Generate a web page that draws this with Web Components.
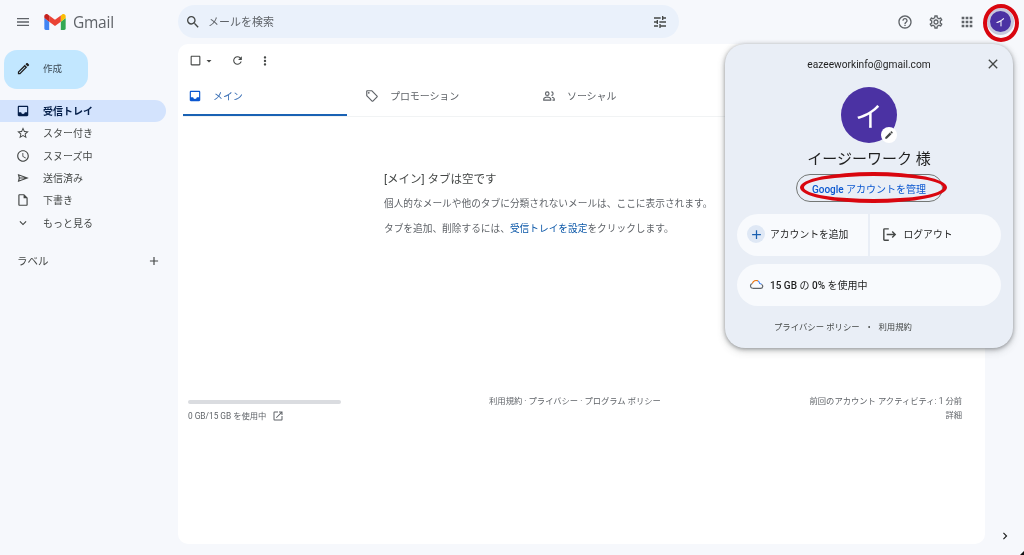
<!DOCTYPE html>
<html lang="ja">
<head>
<meta charset="utf-8">
<title>Gmail</title>
<style>
  html, body { margin: 0; padding: 0; height: 100%; background: #f6f8fc; overflow: hidden; }
  body { font-family: Roboto, "Noto Sans CJK JP", sans-serif; color: #444746; }
</style>
</head>
<body>
<gm-app></gm-app>
<script>
const ICONS = {
  menu: 'M3 18h18v-2H3v2zm0-5h18v-2H3v2zm0-7v2h18V6H3z',
  search: 'M15.5 14h-.79l-.28-.27A6.471 6.471 0 0 0 16 9.5 6.5 6.5 0 1 0 9.5 16c1.61 0 3.09-.59 4.23-1.57l.27.28v.79l5 4.99L20.49 19l-4.99-5zm-6 0C7.01 14 5 11.99 5 9.5S7.01 5 9.5 5 14 7.01 14 9.5 11.99 14 9.5 14z',
  tune: 'M3 17v2h6v-2H3zM3 5v2h10V5H3zm10 16v-2h8v-2h-8v-2h-2v6h2zM7 9v2H3v2h4v2h2V9H7zm14 4v-2H11v2h10zm-6-4h2V7h4V5h-4V3h-2v6z',
  help: 'M11 18h2v-2h-2v2zm1-16C6.48 2 2 6.48 2 12s4.48 10 10 10 10-4.48 10-10S17.52 2 12 2zm0 18c-4.41 0-8-3.59-8-8s3.59-8 8-8 8 3.59 8 8-3.59 8-8 8zm0-14c-2.21 0-4 1.79-4 4h2c0-1.1.9-2 2-2s2 .9 2 2c0 2-3 1.75-3 5h2c0-2.25 3-2.5 3-5 0-2.21-1.79-4-4-4z',
  settings: 'M19.43 12.98c.04-.32.07-.64.07-.98 0-.34-.03-.66-.07-.98l2.11-1.65c.19-.15.24-.42.12-.64l-2-3.46c-.09-.16-.26-.25-.44-.25-.06 0-.12.01-.17.03l-2.49 1c-.52-.4-1.08-.73-1.69-.98l-.38-2.65C14.46 2.18 14.25 2 14 2h-4c-.25 0-.46.18-.49.42l-.38 2.65c-.61.25-1.17.59-1.69.98l-2.49-1c-.06-.02-.12-.03-.18-.03-.17 0-.34.09-.43.25l-2 3.46c-.13.22-.07.49.12.64l2.11 1.65c-.04.32-.07.65-.07.98 0 .33.03.66.07.98l-2.11 1.65c-.19.15-.24.42-.12.64l2 3.46c.09.16.26.25.44.25.06 0 .12-.01.17-.03l2.49-1c.52.4 1.08.73 1.69.98l.38 2.65c.03.24.24.42.49.42h4c.25 0 .46-.18.49-.42l.38-2.65c.61-.25 1.17-.59 1.69-.98l2.49 1c.06.02.12.03.18.03.17 0 .34-.09.43-.25l2-3.46c.12-.22.07-.49-.12-.64l-2.11-1.65zm-1.98-1.71c.04.31.05.52.05.73 0 .21-.02.43-.05.73l-.14 1.13.89.7 1.08.84-.7 1.21-1.27-.51-1.04-.42-.9.68c-.43.32-.84.56-1.25.73l-1.06.43-.16 1.13-.2 1.35h-1.4l-.19-1.35-.16-1.13-1.06-.43c-.43-.18-.83-.41-1.23-.71l-.91-.7-1.06.43-1.27.51-.7-1.21 1.08-.84.89-.7-.14-1.13c-.03-.31-.05-.54-.05-.74s.02-.43.05-.73l.14-1.13-.89-.7-1.08-.84.7-1.21 1.27.51 1.04.42.9-.68c.43-.32.84-.56 1.25-.73l1.06-.43.16-1.13.2-1.35h1.39l.19 1.35.16 1.13 1.06.43c.43.18.83.41 1.23.71l.91.7 1.06-.43 1.27-.51.7 1.21-1.07.85-.89.7.14 1.13zM12 8c-2.21 0-4 1.79-4 4s1.79 4 4 4 4-1.79 4-4-1.79-4-4-4zm0 6c-1.1 0-2-.9-2-2s.9-2 2-2 2 .9 2 2-.9 2-2 2z',
  apps: 'M4 8h4V4H4v4zm6 12h4v-4h-4v4zm-6 0h4v-4H4v4zm0-6h4v-4H4v4zm6 0h4v-4h-4v4zm6-10v4h4V4h-4zm-6 4h4V4h-4v4zm6 6h4v-4h-4v4zm0 6h4v-4h-4v4z',
  edit: 'M3 17.25V21h3.75L17.81 9.94l-3.75-3.75L3 17.25zM20.71 7.04a1 1 0 0 0 0-1.41l-2.34-2.34a1 1 0 0 0-1.41 0l-1.83 1.83 3.75 3.75 1.83-1.83z',
  pen: 'M14.06 9.02l.92.92L5.92 19H5v-.92l9.06-9.06M17.66 3c-.25 0-.51.1-.7.29l-1.83 1.83 3.75 3.75 1.83-1.83a1 1 0 0 0 0-1.41l-2.34-2.34c-.2-.2-.45-.29-.71-.29zM14.06 6.19 3 17.25V21h3.75L17.81 9.94l-3.75-3.75z',
  inbox: 'M19 3H5c-1.1 0-2 .9-2 2v14c0 1.1.9 2 2 2h14c1.1 0 2-.9 2-2V5c0-1.1-.9-2-2-2zm0 2v9h-4c0 1.66-1.34 3-3 3s-3-1.34-3-3H5V5h14z',
  star: 'M22 9.24l-7.19-.62L12 2 9.19 8.63 2 9.24l5.46 4.73L5.82 21 12 17.27 18.18 21l-1.63-7.03L22 9.24zM12 15.4l-3.76 2.27 1-4.28-3.32-2.88 4.38-.38L12 6.1l1.71 4.04 4.38.38-3.32 2.88 1 4.28L12 15.4z',
  clock: 'M11.99 2C6.47 2 2 6.48 2 12s4.47 10 9.99 10C17.52 22 22 17.52 22 12S17.52 2 11.99 2zM12 20c-4.42 0-8-3.58-8-8s3.58-8 8-8 8 3.58 8 8-3.58 8-8 8zm.5-13H11v6l5.25 3.15.75-1.23-4.5-2.67z',
  send: 'M3 5l19 7-19 7 1.6-7zM5.8 8l.8 3h8.1zM6.6 13l-.8 3 8.9-3z',
  draft: 'M14 2H6c-1.1 0-1.99.9-1.99 2L4 20c0 1.1.89 2 1.99 2H18c1.1 0 2-.9 2-2V8l-6-6zM6 20V4h7v5h5v11H6z',
  expand: 'M16.59 8.59 12 13.17 7.41 8.59 6 10l6 6 6-6z',
  plus: 'M19 13h-6v6h-2v-6H5v-2h6V5h2v6h6v2z',
  refresh: 'M17.65 6.35A7.958 7.958 0 0 0 12 4c-4.42 0-7.99 3.58-7.99 8s3.57 8 7.99 8c3.73 0 6.84-2.55 7.73-6h-2.08A5.99 5.99 0 0 1 12 18c-3.31 0-6-2.69-6-6s2.69-6 6-6c1.66 0 3.14.69 4.22 1.78L13 11h7V4l-2.35 2.35z',
  more: 'M12 8c1.1 0 2-.9 2-2s-.9-2-2-2-2 .9-2 2 .9 2 2 2zm0 2c-1.1 0-2 .9-2 2s.9 2 2 2 2-.9 2-2-.9-2-2-2zm0 6c-1.1 0-2 .9-2 2s.9 2 2 2 2-.9 2-2-.9-2-2-2z',
  tag: 'M21.41 11.41l-8.83-8.83C12.21 2.21 11.7 2 11.17 2H4c-1.1 0-2 .9-2 2v7.17c0 .53.21 1.04.59 1.41l8.83 8.83c.78.78 2.05.78 2.83 0l7.17-7.17c.78-.78.78-2.04-.01-2.83zM12.83 20L4 11.17V4h7.17L20 12.83 12.83 20zM6.5 5A1.5 1.5 0 1 0 6.5 8 1.5 1.5 0 1 0 6.5 5z',
  people: 'M9 4a4 4 0 1 0 0 8 4 4 0 0 0 0-8zm0 2a2 2 0 1 1 0 4 2 2 0 0 1 0-4zM16 4v2a2 2 0 0 1 0 4v2a4 4 0 0 0 0-8zM9 13c-3.3 0-7 1.6-7 4v3h14v-3c0-2.4-3.7-4-7-4zm0 2c2.700 0 5 1.200 5 2v1H4v-1c0-.8 2.300-2 5-2zM17 13.200v2c1.800.4 3 1.200 3 1.800v1h-2v2h4v-3c0-2-2.300-3.300-5-3.800z',
  open: 'M19 19H5V5h7V3H5a2 2 0 0 0-2 2v14a2 2 0 0 0 2 2h14c1.1 0 2-.9 2-2v-7h-2v7zM14 3v2h3.59l-9.83 9.83 1.41 1.41L19 6.41V10h2V3h-7z',
  logout: 'M11 3H5a2 2 0 0 0-2 2v14a2 2 0 0 0 2 2h6v-2H5V5h6V3zm5.5 4-1.41 1.41L17.67 11H8v2h9.67l-2.58 2.59L16.5 17l5-5-5-5z',
  close: 'M19 6.41 17.59 5 12 10.59 6.41 5 5 6.41 10.59 12 5 17.59 6.41 19 12 13.41 17.59 19 19 17.59 13.41 12z',
  chevron: 'M10 6 8.59 7.41 13.17 12l-4.58 4.59L10 18l6-6z',
  check: 'M19 5v14H5V5h14m0-2H5c-1.1 0-2 .9-2 2v14c0 1.1.9 2 2 2h14c1.1 0 2-.9 2-2V5c0-1.1-.9-2-2-2z',
  caret: 'M7 10l5 5 5-5z'
};

class GmIcon extends HTMLElement {
  connectedCallback() {
    const size = this.getAttribute('size') || 16;
    const color = this.getAttribute('color') || '#444746';
    this.attachShadow({ mode: 'open' }).innerHTML = `
      <style>
        :host { display: inline-flex; width: ${size}px; height: ${size}px; flex: none; }
        svg { width: 100%; height: 100%; display: block; fill: ${color}; fill-rule: evenodd; }
      </style>
      <svg viewBox="0 0 24 24"><path d="${ICONS[this.getAttribute('name')]}"/></svg>`;
  }
}
customElements.define('gm-icon', GmIcon);

class GmTopbar extends HTMLElement {
  connectedCallback() {
    this.attachShadow({ mode: 'open' }).innerHTML = `
      <style>
        :host { display: flex; align-items: center; height: 43px; padding-bottom: 1px; }
        .brand { width: 178px; flex: none; display: flex; align-items: center; padding-left: 15px; box-sizing: border-box; }
        .logo { width: 22px; height: 16px; margin-left: 13px; display: block; }
        .word { font: 15.5px "Open Sans", Roboto, sans-serif; color: #5f6368; margin-left: 7px; letter-spacing: -.25px; }
        .search { width: 501px; height: 33px; border-radius: 17px; background: #eaf1fb; display: flex; align-items: center; padding: 0 11px 0 7px; box-sizing: border-box; }
        .search span { font-size: 11px; color: #5f6368; margin: 0 0 2px 7px; flex: 1; }
        .actions { display: flex; align-items: center; margin-left: auto; padding-right: 13px; gap: 15px; }
        .avatar { position: relative; width: 21px; height: 21px; margin-bottom: 1px; border-radius: 50%; background: #4b32a3; color: #fff; font-size: 10px; display: grid; place-items: center; box-shadow: 0 0 0 3px #c7c9dc; }
        .avatar::after { content: ""; position: absolute; left: -7px; top: -7px; width: 36px; height: 38px; box-sizing: border-box; border: 4.5px solid #d9060f; border-radius: 50%; }
      </style>
      <div class="brand">
        <gm-icon name="menu" size="16" color="#5f6368"></gm-icon>
        <svg class="logo" viewBox="52 42 88 66">
          <path fill="#4285f4" d="M58 108h14V74L52 59v43c0 3.32 2.69 6 6 6"/>
          <path fill="#34a853" d="M120 108h14c3.32 0 6-2.69 6-6V59l-20 15"/>
          <path fill="#fbbc04" d="M120 48v26l20-15v-8c0-7.42-8.47-11.65-14.4-7.2"/>
          <path fill="#ea4335" d="M72 74V48l24 18 24-18v26L96 92"/>
          <path fill="#c5221f" d="M52 51v8l20 15V48l-5.6-4.2c-5.94-4.45-14.4-.22-14.4 7.2"/>
        </svg>
        <span class="word">Gmail</span>
      </div>
      <div class="search">
        <gm-icon name="search" size="16"></gm-icon>
        <span>メールを検索</span>
        <gm-icon name="tune" size="16"></gm-icon>
      </div>
      <div class="actions">
        <gm-icon name="help" size="16" color="#5f6368"></gm-icon>
        <gm-icon name="settings" size="16" color="#5f6368"></gm-icon>
        <gm-icon name="apps" size="16" color="#5f6368"></gm-icon>
        <div class="avatar">イ</div>
      </div>`;
  }
}
customElements.define('gm-topbar', GmTopbar);

class GmNavItem extends HTMLElement {
  connectedCallback() {
    const active = this.hasAttribute('active');
    this.attachShadow({ mode: 'open' }).innerHTML = `
      <style>
        :host { display: flex; align-items: center; height: 22.3px; padding-left: 16px; border-radius: 0 11px 11px 0; font-size: 10px; color: #444746; }
        :host([active]) { background: #d3e3fd; color: #041e49; font-weight: 700; }
        .label { margin: 0 0 1px 13px; }
      </style>
      <gm-icon name="${this.getAttribute('icon')}" size="14" color="${active ? '#041e49' : '#444746'}"></gm-icon>
      <span class="label"><slot></slot></span>`;
  }
}
customElements.define('gm-nav-item', GmNavItem);

class GmSidebar extends HTMLElement {
  connectedCallback() {
    this.attachShadow({ mode: 'open' }).innerHTML = `
      <style>
        :host { display: block; padding-top: 6px; padding-right: 12px; }
        .compose { width: 84px; height: 39px; margin-left: 4px; border-radius: 13px; background: #c2e7ff; display: flex; align-items: center; padding: 0 0 3px 12px; box-sizing: border-box; font-size: 9.5px; color: #3c4a55; }
        .compose span { margin-left: 12px; }
        nav { margin-top: 11px; }
        .labels { display: flex; align-items: center; justify-content: space-between; margin-top: 15px; padding: 0 5px 0 17px; height: 24px; font-size: 10.5px; color: #444746; }
      </style>
      <div class="compose"><gm-icon name="pen" size="15" color="#1f1f1f"></gm-icon><span>作成</span></div>
      <nav>
        <gm-nav-item icon="inbox" active>受信トレイ</gm-nav-item>
        <gm-nav-item icon="star">スター付き</gm-nav-item>
        <gm-nav-item icon="clock">スヌーズ中</gm-nav-item>
        <gm-nav-item icon="send">送信済み</gm-nav-item>
        <gm-nav-item icon="draft">下書き</gm-nav-item>
        <gm-nav-item icon="expand">もっと見る</gm-nav-item>
      </nav>
      <div class="labels"><span>ラベル</span><gm-icon name="plus" size="14"></gm-icon></div>`;
  }
}
customElements.define('gm-sidebar', GmSidebar);

class GmTab extends HTMLElement {
  connectedCallback() {
    const active = this.hasAttribute('active');
    this.attachShadow({ mode: 'open' }).innerHTML = `
      <style>
        :host { display: flex; align-items: center; height: 39px; box-sizing: border-box; padding: 0 0 2px 5px; font-size: 10px; letter-spacing: -.1px; color: #5f6368; width: 177px; }
        :host([active]) { color: #3a6fb5; width: 164px; margin-right: 13px; border-bottom: 2px solid #1a62b4; padding-bottom: 0; }
        span { margin-left: 11px; }
      </style>
      <gm-icon name="${this.getAttribute('icon')}" size="14" color="${active ? '#0b57d0' : '#5f6368'}"></gm-icon>
      <span><slot></slot></span>`;
  }
}
customElements.define('gm-tab', GmTab);

class GmMain extends HTMLElement {
  connectedCallback() {
    this.attachShadow({ mode: 'open' }).innerHTML = `
      <style>
        :host { display: flex; flex-direction: column; background: #fff; border-radius: 10px; height: 500px; }
        .tools { display: flex; align-items: center; height: 33px; padding-left: 11px; flex: none; }
        .caret { margin-left: 1px; margin-right: 15.5px; }
        .tools .refresh { margin-right: 14.5px; }
        .tabs { display: flex; margin-left: 5px; border-bottom: 1px solid #f1f3f4; height: 40px; box-sizing: border-box; flex: none; }
        .empty { padding: 54px 0 0 206px; color: #5f6368; height: 277px; box-sizing: border-box; flex: none; }
        h2 { font-size: 11.5px; font-weight: 400; margin: 0 0 10px; color: #444746; line-height: 16px; }
        p { font-size: 9.7px; margin: 0 0 11px; line-height: 14px; white-space: nowrap; }
        a { color: #0b57a8; text-decoration: none; }
        .foot { display: grid; grid-template-columns: 1fr auto 1fr; padding: 0 23px 0 10px; font-size: 8.3px; color: #5f6368; line-height: 14px; }
        .bar { width: 153px; height: 4px; border-radius: 2px; background: #dadce0; margin: 6px 0 5px; }
        .usage { display: flex; align-items: center; gap: 6px; }
        .right { text-align: right; }
      </style>
      <div class="tools">
        <gm-icon name="check" size="13"></gm-icon>
        <gm-icon class="caret" name="caret" size="12"></gm-icon>
        <gm-icon class="refresh" name="refresh" size="13"></gm-icon>
        <gm-icon name="more" size="14"></gm-icon>
      </div>
      <div class="tabs">
        <gm-tab icon="inbox" active>メイン</gm-tab>
        <gm-tab icon="tag">プロモーション</gm-tab>
        <gm-tab icon="people">ソーシャル</gm-tab>
      </div>
      <div class="empty">
        <h2>[メイン] タブは空です</h2>
        <p>個人的なメールや他のタブに分類されないメールは、ここに表示されます。</p>
        <p>タブを追加、削除するには、<a>受信トレイを設定</a>をクリックします。</p>
      </div>
      <div class="foot">
        <div>
          <div class="bar"></div>
          <div class="usage">0 GB/15 GB を使用中 <gm-icon name="open" size="12" color="#5f6368"></gm-icon></div>
        </div>
        <div>利用規約 · プライバシー · プログラム ポリシー</div>
        <div class="right">前回のアカウント アクティビティ: 1 分前<br>詳細</div>
      </div>`;
  }
}
customElements.define('gm-main', GmMain);

class GmAccount extends HTMLElement {
  connectedCallback() {
    this.attachShadow({ mode: 'open' }).innerHTML = `
      <style>
        :host { position: absolute; left: 725px; top: 44px; width: 288px; height: 304px; box-sizing: border-box; border-radius: 20px; background: #e9eef6; box-shadow: 0 1px 4px rgba(60,64,67,.5), 0 3px 8px rgba(60,64,67,.2); display: flex; flex-direction: column; align-items: center; padding: 0 12px; color: #1f1f1f; }
        .head { align-self: stretch; height: 40px; flex: none; display: flex; align-items: center; justify-content: center; font-size: 10.2px; color: #1f1f1f; position: relative; }
        .head gm-icon { position: absolute; right: 0; top: 12px; }
        .pic { position: relative; width: 56px; height: 56px; border-radius: 50%; background: #4b32a3; color: #fff; font-size: 28px; display: grid; place-items: center; margin-top: 3px; flex: none; }
        .badge { position: absolute; right: 0; bottom: 0; width: 16px; height: 16px; border-radius: 50%; background: #fff; display: grid; place-items: center; }
        .name { font-size: 15px; line-height: 20px; margin-top: 6px; color: #1f1f1f; }
        .manage { position: relative; margin-top: 5px; width: 147px; height: 28px; box-sizing: border-box; border: 1px solid #747775; border-radius: 14px; display: grid; place-items: center; font-size: 10px; color: #0b57d0; flex: none; }
        .manage b { font-weight: 500; }
        .manage::after { content: ""; position: absolute; left: 3px; top: -3px; width: 147px; height: 31px; box-sizing: border-box; border: 4px solid #d9060f; border-radius: 50%; }
        .row { align-self: stretch; display: flex; gap: 2px; margin-top: 12px; flex: none; }
        .cell { flex: 1; height: 42px; background: #f8fafd; display: flex; align-items: center; font-size: 9.8px; color: #1f1f1f; box-sizing: border-box; padding-bottom: 2px; }
        .cell.l { border-radius: 21px 0 0 21px; padding-left: 10px; }
        .cell.r { border-radius: 0 21px 21px 0; padding-left: 11px; }
        .dot { width: 18px; height: 18px; border-radius: 50%; background: #dfe8f5; display: grid; place-items: center; margin-right: 5px; }
        .r gm-icon { margin-right: 6px; }
        .store { align-self: stretch; height: 42px; margin-top: 8px; border-radius: 21px; background: #f8fafd; display: flex; align-items: center; padding: 0 0 2px 11px; box-sizing: border-box; font-size: 10px; color: #1f1f1f; flex: none; }
        .store svg { width: 16px; height: 16px; margin-right: 6px; }
        .store b { font-weight: 500; }
        .legal { align-self: flex-start; margin: 14px 0 0 37px; font-size: 8.4px; color: #444746; line-height: 14px; display: flex; gap: 8px; }
      </style>
      <div class="head"><span>eazeeworkinfo@gmail.com</span><gm-icon name="close" size="16"></gm-icon></div>
      <div class="pic">イ<div class="badge"><gm-icon name="edit" size="10"></gm-icon></div></div>
      <div class="name">イージーワーク 様</div>
      <div class="manage"><span><b>Google</b> アカウントを管理</span></div>
      <div class="row">
        <div class="cell l"><div class="dot"><gm-icon name="plus" size="15" color="#1a5fb0"></gm-icon></div>アカウントを追加</div>
        <div class="cell r"><gm-icon name="logout" size="17"></gm-icon>ログアウト</div>
      </div>
      <div class="store">
        <svg viewBox="0 0 24 24" fill="none" stroke-width="1.7">
          <path stroke="#5f6368" d="M7 18.500H19a3.200 3.200 0 0 0 1-6.200"/>
          <path stroke="#5f6368" d="M7 18.500a3.700 3.700 0 0 1-.4-7.300"/>
          <path stroke="#e8710a" d="M6.600 11.200A6 6 0 0 1 15 7.300"/>
          <path stroke="#4285f4" d="M15 7.300a6 6 0 0 1 2.600 4 3.200 3.200 0 0 1 2.400 1"/>
        </svg>
        <span><b>15 GB</b> の <b>0%</b> を使用中</span>
      </div>
      <div class="legal"><span>プライバシー ポリシー</span><span>•</span><span>利用規約</span></div>`;
  }
}
customElements.define('gm-account', GmAccount);

class GmApp extends HTMLElement {
  connectedCallback() {
    this.attachShadow({ mode: 'open' }).innerHTML = `
      <style>
        :host { display: grid; position: relative; grid-template-columns: 178px 807px 39px; grid-template-rows: 44px 511px; width: 1024px; height: 555px; background: #f6f8fc; overflow: hidden; filter: blur(.3px); }
        gm-topbar { grid-column: 1 / -1; }
        .rail { display: flex; align-items: flex-end; justify-content: center; padding-bottom: 12px; box-sizing: border-box; }
        .corner { position: absolute; right: 0; bottom: 0; border-style: solid; border-width: 0 0 4px 4px; border-color: transparent transparent #111 transparent; }
      </style>
      <gm-topbar></gm-topbar>
      <gm-sidebar></gm-sidebar>
      <gm-main></gm-main>
      <div class="rail"><gm-icon name="chevron" size="14" color="#1f1f1f"></gm-icon></div>
      <gm-account></gm-account>
      <div class="corner"></div>`;
  }
}
customElements.define('gm-app', GmApp);
</script>
</body>
</html>
